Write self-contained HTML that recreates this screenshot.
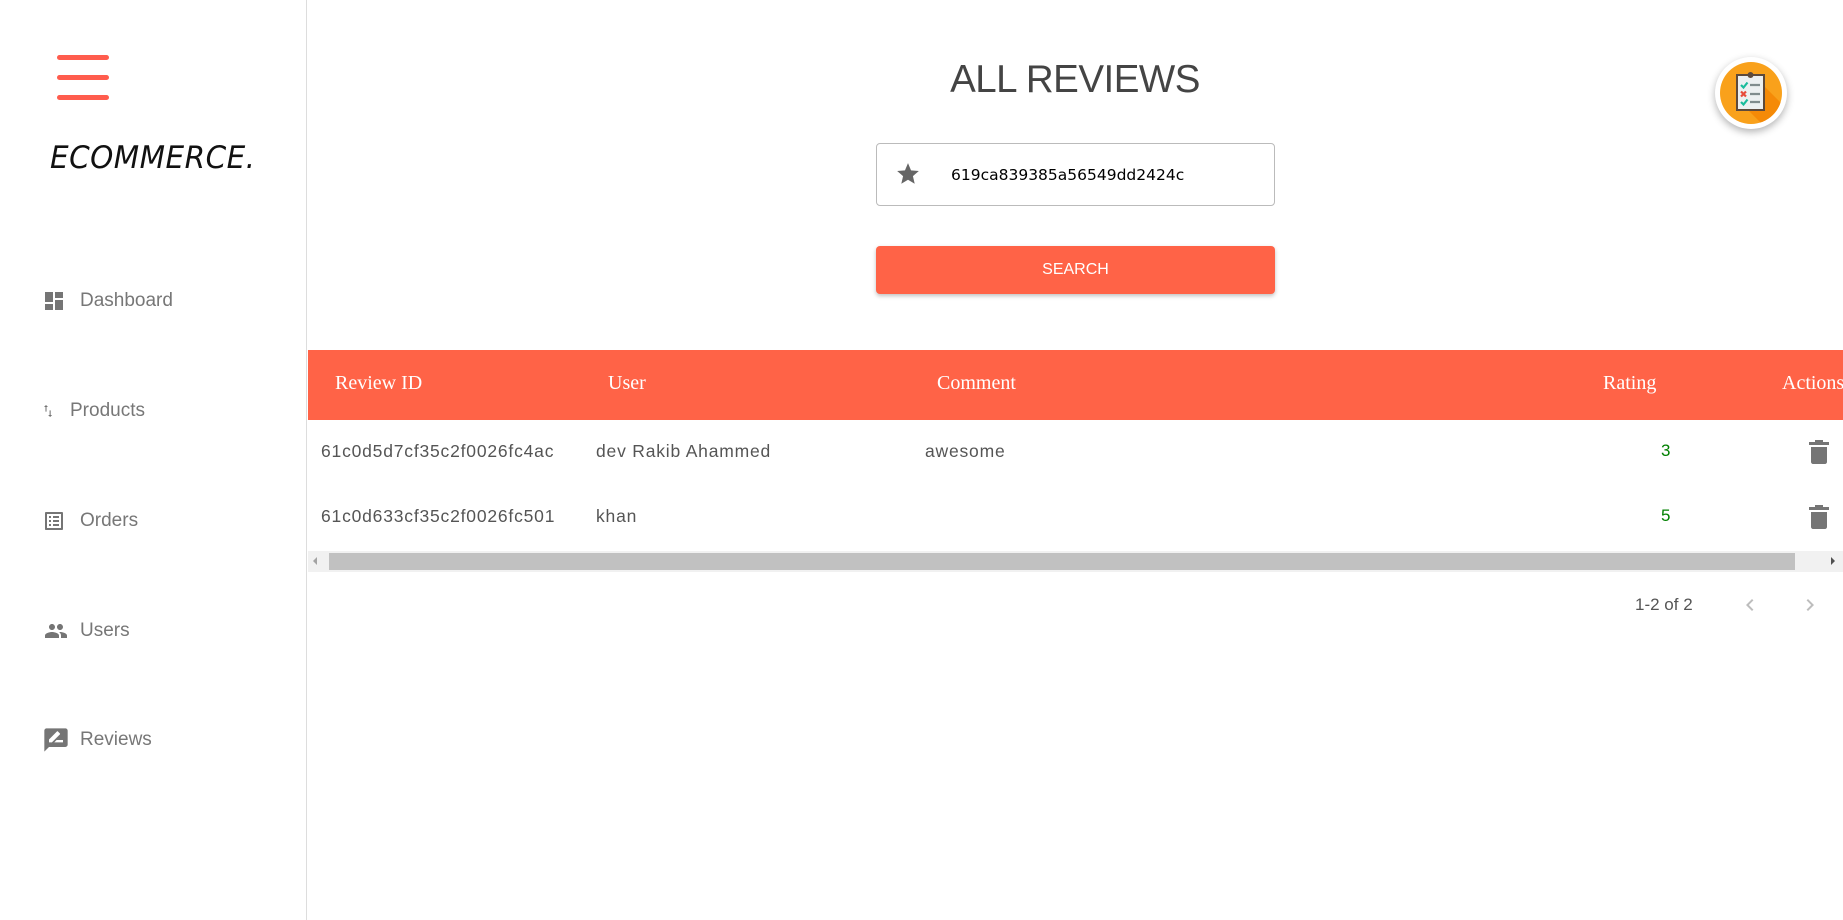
<!DOCTYPE html>
<html><head><meta charset="utf-8"><style>
*{margin:0;padding:0;box-sizing:border-box}
body{width:1843px;height:920px;background:#fff;font-family:"Liberation Sans",sans-serif;position:relative;overflow:hidden}
.abs{position:absolute}
.side{left:0;top:0;width:307px;height:920px;border-right:1.5px solid #ddd}
.bar{position:absolute;left:57px;width:52px;height:5px;border-radius:3px;background:#ff5c4d}
.nav{position:absolute;left:42px;display:flex;align-items:center;color:#777;font-size:19px;height:26px}
.nav svg{width:24px;height:24px;margin-right:14px;fill:#757575}
.th{position:absolute;top:372px;color:#fff;font-family:"Liberation Serif",serif;font-size:20px}
.td{position:absolute;color:#555;font-size:17.5px;white-space:nowrap;letter-spacing:0.8px}
.rt{position:absolute;color:#008000;font-size:17px}
.trash{position:absolute;left:1809px;width:20px;height:24px}
</style></head><body>
<div class="abs side">
  <div class="bar" style="top:55px"></div>
  <div class="bar" style="top:75px"></div>
  <div class="bar" style="top:95px"></div>
  <div class="abs" style="left:50px;top:140px;font-size:31px;font-style:italic;color:#111;letter-spacing:0.5px;transform:scaleX(0.95);transform-origin:left;font-family:'DejaVu Sans','Liberation Sans',sans-serif;font-weight:200">ECOMMERCE.</div>
  <div class="nav" style="top:288px"><svg viewBox="0 0 24 24"><path d="M3 13h8V3H3v10zm0 8h8v-6H3v6zm10 0h8V11h-8v10zm0-18v6h8V3h-8z"/></svg>Dashboard</div>
  <div class="nav" style="top:398px"><svg viewBox="0 0 24 24" style="width:16px;margin-right:12px"><path d="M4 3l-3 3h2.2v7h1.6V6H7zM11 18V11H9.4v7H7.2l3 3 3-3z" transform="translate(2,0)"/></svg>Products</div>
  <div class="nav" style="top:508px"><svg viewBox="0 0 24 24"><path d="M19 5v14H5V5h14m1.1-2H3.9c-.5 0-.9.4-.9.9v16.2c0 .4.4.9.9.9h16.2c.4 0 .9-.5.9-.9V3.9c0-.5-.5-.9-.9-.9zM11 7h6v2h-6V7zm0 4h6v2h-6v-2zm0 4h6v2h-6zM7 7h2v2H7zm0 4h2v2H7zm0 4h2v2H7z"/></svg>Orders</div>
  <div class="nav" style="top:618px"><svg viewBox="0 0 24 24" style="width:28px;margin-right:10px"><path d="M16 11c1.66 0 2.99-1.34 2.99-3S17.66 5 16 5c-1.66 0-3 1.34-3 3s1.34 3 3 3zm-8 0c1.660 0 2.99-1.34 2.99-3S9.66 5 8 5C6.34 5 5 6.34 5 8s1.34 3 3 3zm0 2c-2.33 0-7 1.170-7 3.5V19h14v-2.5c0-2.33-4.67-3.5-7-3.5zm8 0c-.29 0-.62.02-.97.05 1.16.84 1.97 1.97 1.97 3.45V19h6v-2.5c0-2.33-4.670-3.5-7-3.5z"/></svg>Users</div>
  <div class="nav" style="top:727px"><svg viewBox="0 0 24 24" style="width:28px;height:28px;margin-right:10px"><path d="M20 2H4c-1.1 0-2 .9-2 2v18l4-4h14c1.1 0 2-.9 2-2V4c0-1.1-.9-2-2-2zM6 14v-2.47l6.88-6.88c.2-.2.51-.2.71 0l1.77 1.77c.2.2.2.51 0 .71L8.470 14H6zm12 0h-7.5l2-2H18v2z"/></svg>Reviews</div>
</div>

<div class="abs" style="left:0;width:2150px;text-align:center;top:57px;font-size:38.5px;color:#444;line-height:46px;letter-spacing:-0.5px">ALL REVIEWS</div>

<div class="abs" style="left:1715px;top:57px;width:72px;height:72px;border-radius:50%;background:#fff;box-shadow:0 3px 8px rgba(0,0,0,.3)"></div>
<div class="abs" style="left:1720px;top:62px;width:62px;height:62px;border-radius:50%;background:#f9a11b;overflow:hidden">
  <svg width="62" height="62" viewBox="0 0 62 62"><path d="M40 20 L70 50 L50 70 L25 45z" fill="#f58a07"/>
  <rect x="17" y="13" width="27" height="35" fill="#ecf0f1" stroke="#5d4a3c" stroke-width="2"/>
  <circle cx="30.5" cy="13" r="3" fill="#5d4a3c"/>
  <path d="M21 23l2.5 2.5 4-5M21 40l2.5 2.5 4-5" stroke="#1abc9c" stroke-width="2.2" fill="none"/>
  <path d="M21 29.5l5 5M26 29.5l-5 5" stroke="#e74c3c" stroke-width="2.2"/>
  <path d="M30 23h10M30 32h10M30 40h10" stroke="#7f8c8d" stroke-width="2.2"/></svg>
</div>

<div class="abs" style="left:876px;top:143px;width:399px;height:63px;border:1px solid #bbb;border-radius:4px"></div>
<svg class="abs" style="left:895px;top:161px" width="26" height="26" viewBox="0 0 24 24"><path fill="#666" d="M12 17.27L18.18 21l-1.64-7.03L22 9.24l-7.19-.61L12 2 9.19 8.63 2 9.24l5.46 4.73L5.82 21z"/></svg>
<div class="abs" style="left:951px;top:164px;color:#000;line-height:22px;font-family:'DejaVu Sans',sans-serif;font-size:15.5px">619ca839385a56549dd2424c</div>

<div class="abs" style="left:876px;top:246px;width:399px;height:48px;background:#ff6347;border-radius:4px;box-shadow:0 2px 4px rgba(0,0,0,.25);color:#fff;font-size:16px;text-align:center;line-height:48px">SEARCH</div>

<div class="abs" style="left:308px;top:350px;width:1535px;height:70px;background:#ff6347"></div>
<div class="th" style="left:335px">Review ID</div>
<div class="th" style="left:608px">User</div>
<div class="th" style="left:937px">Comment</div>
<div class="th" style="left:1603px">Rating</div>
<div class="th" style="left:1782px">Actions</div>

<div class="td" style="left:321px;top:441px">61c0d5d7cf35c2f0026fc4ac</div>
<div class="td" style="left:596px;top:441px">dev Rakib Ahammed</div>
<div class="td" style="left:925px;top:441px">awesome</div>
<div class="rt" style="left:1661px;top:441px">3</div>
<div class="td" style="left:321px;top:506px">61c0d633cf35c2f0026fc501</div>
<div class="td" style="left:596px;top:506px">khan</div>
<div class="rt" style="left:1661px;top:506px">5</div>
<svg class="trash" style="top:440px" viewBox="0 0 20 24"><path fill="#757575" d="M6 0h8v2h6v3H0V2h6zM2 7h16v15c0 1-1 2-2 2H4c-1 0-2-1-2-2z"/></svg>
<svg class="trash" style="top:505px" viewBox="0 0 20 24"><path fill="#757575" d="M6 0h8v2h6v3H0V2h6zM2 7h16v15c0 1-1 2-2 2H4c-1 0-2-1-2-2z"/></svg>

<div class="abs" style="left:308px;top:551px;width:1535px;height:21px;background:#f1f1f1"></div>
<div class="abs" style="left:329px;top:553px;width:1466px;height:17px;background:#c1c1c1"></div>
<div class="abs" style="left:313px;top:557px;width:0;height:0;border-top:4px solid transparent;border-bottom:4px solid transparent;border-right:4px solid #a3a3a3"></div>
<div class="abs" style="left:1831px;top:557px;width:0;height:0;border-top:4px solid transparent;border-bottom:4px solid transparent;border-left:4px solid #505050"></div>

<div class="abs" style="left:1635px;top:595px;font-size:17px;color:#555">1-2 of 2</div>
<svg class="abs" style="left:1738px;top:593px" width="24" height="24" viewBox="0 0 24 24"><path fill="#bdbdbd" d="M15.41 7.41L14 6l-6 6 6 6 1.41-1.41L10.83 12z"/></svg>
<svg class="abs" style="left:1798px;top:593px" width="24" height="24" viewBox="0 0 24 24"><path fill="#bdbdbd" d="M10 6L8.59 7.41 13.17 12l-4.58 4.59L10 18l6-6z"/></svg>
</body></html>
